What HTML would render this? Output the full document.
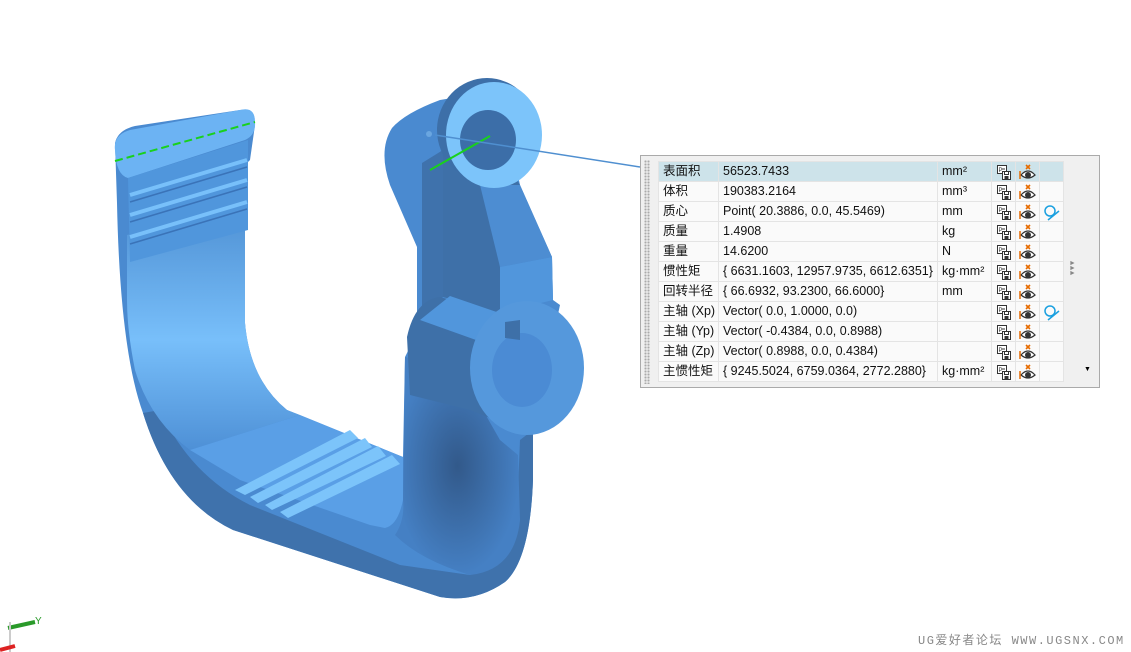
<!DOCTYPE html><html><head><meta charset="utf-8"><style>
body{margin:0;width:1131px;height:652px;background:#fff;overflow:hidden;position:relative;font-family:"Liberation Sans","Noto Sans CJK SC",sans-serif}
#panel{position:absolute;left:640px;top:155px;width:458px;height:231px;border:1px solid #aaa;background:#f0f0f0}
#grip{position:absolute;left:3px;top:4px;width:6px;height:224px;background-image:radial-gradient(#aaa 1px,transparent 1.2px);background-size:3px 3px}
table{position:absolute;left:17px;top:5px;border-collapse:collapse;font-size:12.5px;color:#111;background:#fff;table-layout:fixed;width:405px}
td{height:19px;line-height:19px;border:1px solid #e4e4e4;padding:0 0 0 4px;white-space:nowrap;background:#fafafa;overflow:hidden}
tr{height:20px}
tr:first-child td{background:#cde3ea}
td.i{padding:0;text-align:center}
td.i svg{display:block;margin:1px auto 0}
.wm{position:absolute;left:918px;top:631px;font-family:"Liberation Mono","Noto Sans CJK SC",monospace;font-size:12px;color:#888;letter-spacing:1.5px}
</style></head><body>
<svg width="1131" height="652" style="position:absolute;left:0;top:0">
<defs>
<linearGradient id="lf" x1="0" y1="0" x2="0" y2="1"><stop offset="0" stop-color="#4e8fd2"/><stop offset=".55" stop-color="#78bffa"/><stop offset="1" stop-color="#4e90d6"/></linearGradient>
<radialGradient id="dk" cx=".5" cy=".5" r=".5"><stop offset="0" stop-color="#32598a"/><stop offset="1" stop-color="#4580c4"/></radialGradient>
</defs>
<path d="M115,143 Q118,130 135,126 L240,110 Q255,108 255,125 L250,160 L245,165 L245,323 Q250,380 287,410 L403,457 L405,357 L417,333 L417,247 L390,185 Q378,150 392,128 Q405,113 440,100 L500,90 L520,185 L552,257 L553,300 L560,305 L533,430 L533,480 Q530,560 505,582 Q475,603 440,597 L233,530 Q170,500 143,413 Q120,350 117,203 Z" fill="#4a8ad0"/>
<path d="M143,413 Q170,500 233,530 L440,597 Q475,603 505,582 Q530,560 533,480 L533,430 L520,440 L518,490 Q512,560 470,575 L400,565 L250,505 Q190,475 160,410 Z" fill="#3f72ac"/>
<path d="M127,235 L245,205 L245,323 Q250,380 287,410 L300,415 L190,450 Q150,420 135,370 Q127,330 127,300 Z" fill="url(#lf)"/>
<path d="M190,450 L300,415 L403,457 L403,500 Q398,525 385,528 L370,525 L240,480 Z" fill="#5a9fe6"/>
<g fill="#7cc4fa"><path d="M235,490 L350,430 L358,438 L245,495 Z"/><path d="M250,497 L365,438 L372,447 L258,503 Z"/><path d="M265,505 L378,446 L386,456 L272,510 Z"/><path d="M280,512 L392,455 L400,464 L288,518 Z"/></g>
<path d="M405,357 L460,370 L500,440 L518,455 L520,520 Q515,570 470,575 Q420,560 395,535 Q405,520 403,500 Z" fill="url(#dk)"/>
<path d="M115,150 Q113,135 130,130 L240,110 Q255,106 255,122 Q256,135 245,140 L128,178 Q116,175 115,150 Z" fill="#6cb3f3"/>
<path d="M128,178 L248,140 L248,230 L130,262 Z" fill="#5096dc"/>
<g stroke="#78c0fa" stroke-width="4" fill="none"><path d="M130,195 L247,160"/><path d="M130,215 L247,180"/><path d="M130,237 L247,202"/></g>
<g stroke="#3a73b8" stroke-width="1.5" fill="none"><path d="M130,202 L247,167"/><path d="M130,222 L247,187"/><path d="M130,244 L247,209"/></g>
<line x1="115" y1="161" x2="255" y2="122" stroke="#19d11c" stroke-width="2" stroke-dasharray="8,4"/>
<path d="M422,163 L443,150 L443,297 L422,313 Z" fill="#3f72ac"/>
<path d="M443,130 L480,120 L520,185 L500,267 L500,313 L443,297 Z" fill="#3e70a8"/>
<path d="M500,267 L552,257 L553,300 L500,313 Z" fill="#5196dc"/>
<path d="M480,185 L520,185 L552,257 L500,267 Z" fill="#4d8dd2"/>
<ellipse cx="487" cy="130" rx="50" ry="52" fill="#3d6fa8"/>
<ellipse cx="494" cy="135" rx="48" ry="53" fill="#7cc4fa"/>
<ellipse cx="488" cy="140" rx="28" ry="30" fill="#3c6ea8"/>
<line x1="430" y1="170" x2="490" y2="136" stroke="#19d11c" stroke-width="2"/>
<circle cx="429" cy="134" r="3" fill="#6aa6e0"/>
<line x1="435" y1="135" x2="640" y2="167" stroke="#4f8fd0" stroke-width="1.5"/>
<path d="M407,337 Q415,300 440,297 L520,320 L520,430 L470,410 L410,395 Z" fill="#3e70a8"/>
<path d="M420,320 L450,296 L520,320 L490,345 Z" fill="#5196dc"/>
<ellipse cx="527" cy="368" rx="57" ry="67" fill="#5598dc"/>
<ellipse cx="522" cy="370" rx="30" ry="37" fill="#4b8bd4"/>
<path d="M505,322 L520,320 L520,340 L505,338 Z" fill="#3e70a8"/>
<path d="M8 628 L35 622" stroke="#2a9a2a" stroke-width="4"/>
<line x1="10" y1="622" x2="10" y2="652" stroke="#ccc" stroke-width="2"/>
<path d="M0 650 L15 646" stroke="#d22" stroke-width="4"/>
<text x="35" y="624" font-size="10" fill="#2a9a2a" font-family="Liberation Sans">Y</text>
</svg>
<div id="panel"><div id="grip"></div>
<table>
<colgroup><col style="width:60px"><col style="width:219px"><col style="width:54px"><col style="width:24px"><col style="width:24px"><col style="width:24px"></colgroup>
<tbody id="tb">
<tr><td>表面积</td><td>56523.7433</td><td>mm²</td><td class="i">A</td><td class="i">B</td><td class="i"></td></tr>
<tr><td>体积</td><td>190383.2164</td><td>mm³</td><td class="i">A</td><td class="i">B</td><td class="i"></td></tr>
<tr><td>质心</td><td>Point( 20.3886, 0.0, 45.5469)</td><td>mm</td><td class="i">A</td><td class="i">B</td><td class="i">C</td></tr>
<tr><td>质量</td><td>1.4908</td><td>kg</td><td class="i">A</td><td class="i">B</td><td class="i"></td></tr>
<tr><td>重量</td><td>14.6200</td><td>N</td><td class="i">A</td><td class="i">B</td><td class="i"></td></tr>
<tr><td>惯性矩</td><td>{ 6631.1603, 12957.9735, 6612.6351}</td><td>kg·mm²</td><td class="i">A</td><td class="i">B</td><td class="i"></td></tr>
<tr><td>回转半径</td><td>{ 66.6932, 93.2300, 66.6000}</td><td>mm</td><td class="i">A</td><td class="i">B</td><td class="i"></td></tr>
<tr><td>主轴 (Xp)</td><td>Vector( 0.0, 1.0000, 0.0)</td><td></td><td class="i">A</td><td class="i">B</td><td class="i">C</td></tr>
<tr><td>主轴 (Yp)</td><td>Vector( -0.4384, 0.0, 0.8988)</td><td></td><td class="i">A</td><td class="i">B</td><td class="i"></td></tr>
<tr><td>主轴 (Zp)</td><td>Vector( 0.8988, 0.0, 0.4384)</td><td></td><td class="i">A</td><td class="i">B</td><td class="i"></td></tr>
<tr><td>主惯性矩</td><td>{ 9245.5024, 6759.0364, 2772.2880}</td><td>kg·mm²</td><td class="i">A</td><td class="i">B</td><td class="i"></td></tr>
</tbody>
</table>
<div style="position:absolute;left:428px;top:105px;font-size:7px;color:#888;line-height:5px">►<br>►<br>►</div>
<div style="position:absolute;left:443px;top:210px;font-size:7px;color:#000">▼</div>
</div>
<div class="wm">UG爱好者论坛 WWW.UGSNX.COM</div>
<script>
var A='<svg width="16" height="17" viewBox="0 0 16 17"><rect x="1.5" y="1.5" width="9" height="8" fill="#fff" stroke="#333"/><text x="2.5" y="8" font-size="6" font-family="Liberation Sans" fill="#333">P</text><line x1="6" y1="5" x2="9" y2="5" stroke="#333"/><rect x="6.5" y="7.5" width="8" height="8" fill="#fff" stroke="#333"/><rect x="8.5" y="7.5" width="4" height="3" fill="none" stroke="#333"/><rect x="8.5" y="12" width="4" height="3.5" fill="#333"/></svg>';
var B='<svg width="18" height="17" viewBox="0 0 18 17"><path d="M7 1 L11 5 M11 1 L7 5" stroke="#e66b00" stroke-width="1.6"/><path d="M2 11 Q9 3 16 11 Q9 17 2 11 Z" fill="#fff" stroke="#333" stroke-width="1.3"/><circle cx="9" cy="11" r="3" fill="#333"/><path d="M1 7 L1 15" stroke="#e66b00" stroke-width="1.5"/></svg>';
var C='<svg width="18" height="17" viewBox="0 0 18 17"><circle cx="7" cy="7" r="5" fill="none" stroke="#1aa0e0" stroke-width="1.5"/><line x1="5" y1="16" x2="16" y2="7" stroke="#1aa0e0" stroke-width="1.5"/></svg>';
document.querySelectorAll('td.i').forEach(function(t){var v=t.textContent;t.innerHTML=v=='A'?A:v=='B'?B:v=='C'?C:'';});
</script>
</body></html>
